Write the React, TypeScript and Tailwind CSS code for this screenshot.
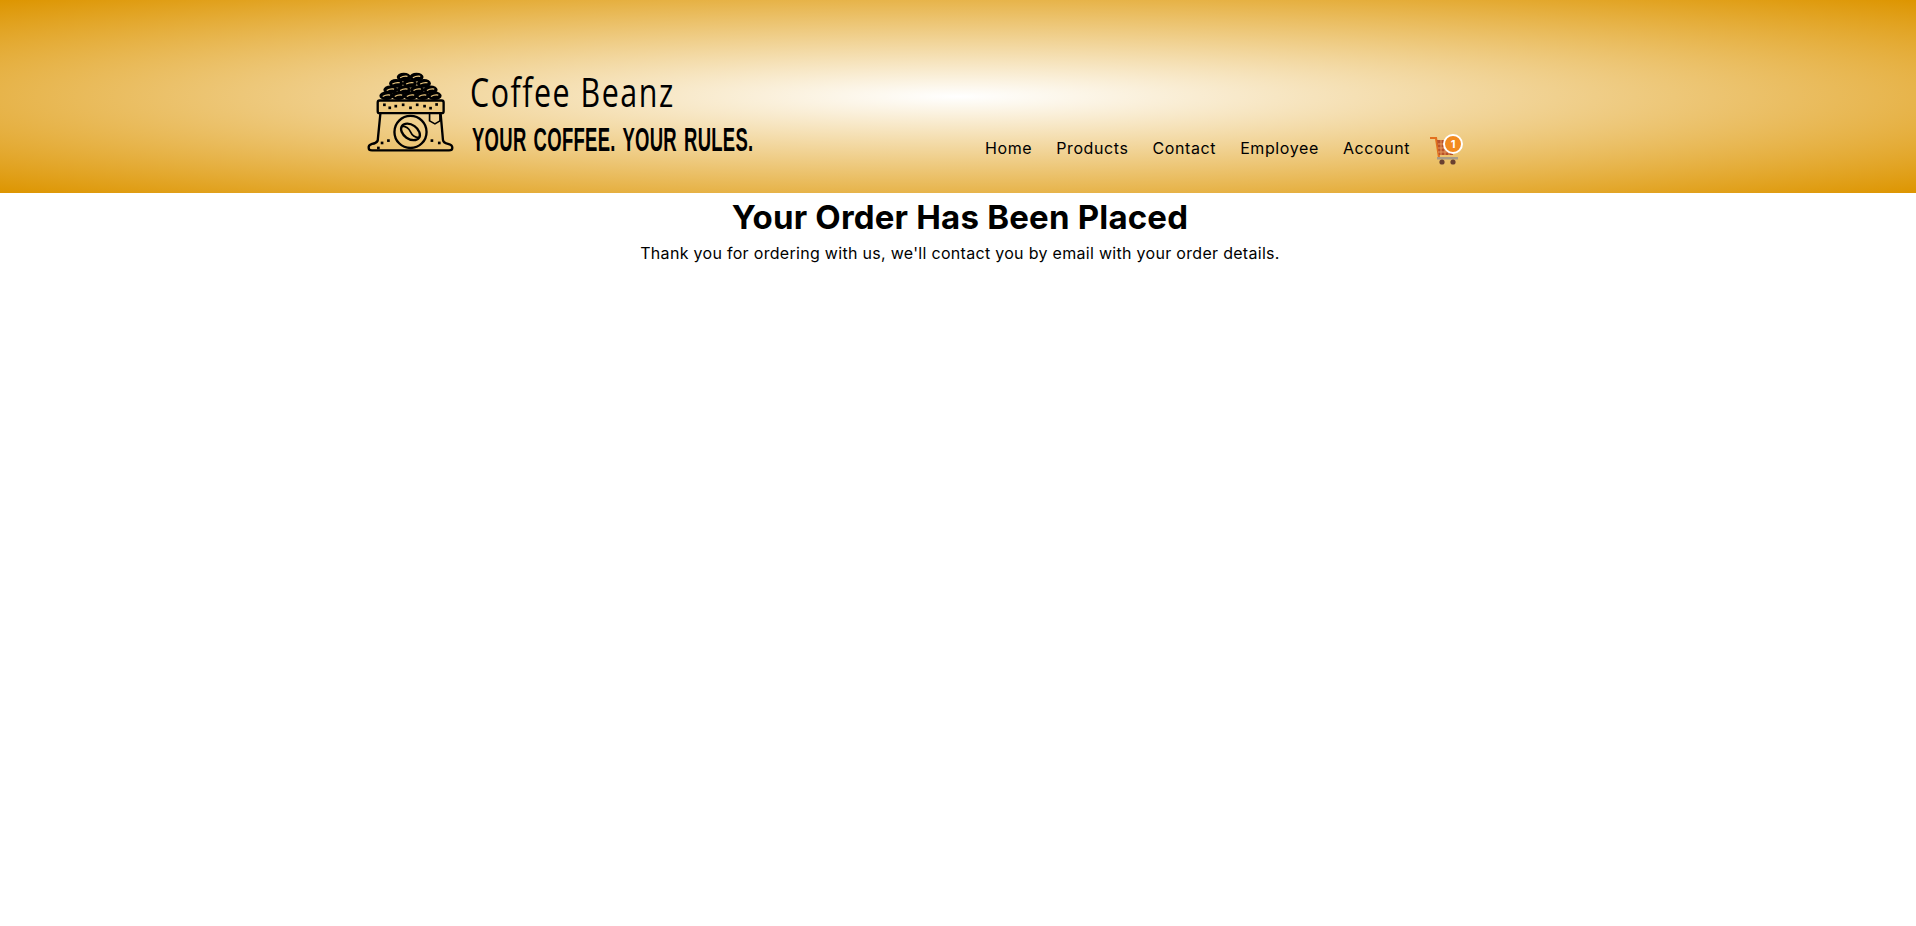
const links = ["Home", "Products", "Contact", "Employee", "Account"];

function BagLogo() {
  const beans = [
    [160, 68], [198, 68],
    [137, 87], [178, 87], [220, 87],
    [120, 106], [160, 106], [200, 106], [240, 106],
    [108, 124], [144, 124], [180, 124], [216, 124], [252, 124],
  ];
  return (
    <svg viewBox="50 50 260 245" className="w-[87px] h-[82px] shrink-0">
      {beans.map(([x, y]) => (
        <g key={`${x}-${y}`}>
          <ellipse cx={x} cy={y} rx="21" ry="13" fill="#000" />
          <path d={`M${x - 11} ${y + 2}q11 -6 22 -4`} stroke="#eec97f" strokeWidth="3.5" fill="none" />
        </g>
      ))}
      <rect x="82" y="138" width="197" height="38" rx="6" fill="#eec97f" stroke="#000" strokeWidth="7" />
      <path d="M90 177L82 258Q78 266 65 268Q54 272 55 279Q55 287 65 287H295Q305 287 305 279Q305 271 292 268Q278 265 277 256L270 177" fill="none" stroke="#000" strokeWidth="7" strokeLinejoin="round" />
      <path d="M237 177V199L253 208L268 199V177" fill="none" stroke="#000" strokeWidth="5" />
      <circle cx="180" cy="232" r="48" fill="none" stroke="#000" strokeWidth="7" />
      <g transform="rotate(35 180 232)">
        <ellipse cx="180" cy="232" rx="31" ry="21" fill="none" stroke="#000" strokeWidth="7" />
        <path d="M150 232q15 -9 30 0t30 0" fill="none" stroke="#000" strokeWidth="5" />
      </g>
      {[[102, 151], [118, 160], [136, 155], [158, 151], [180, 160], [200, 151], [222, 155], [240, 161], [258, 150],
        [95, 265], [114, 258], [244, 258], [266, 265], [84, 280]].map(([x, y]) => (
        <rect key={`${x}-${y}`} x={x - 4} y={y - 4} width="8" height="8" fill="#000" />
      ))}
    </svg>
  );
}

function Cart() {
  return (
    <div className="relative w-[34px] h-[31px] ml-[20px] shrink-0">
      <svg viewBox="0 0 34 31" className="w-[34px] h-[31px]">
        <path d="M0 4H6L9 23" fill="none" stroke="#e2701f" strokeWidth="2.2" />
        <path d="M7 6H24L23 21H9Z" fill="#b9512a" />
        <path d="M8 10H24M8 14H24M8 18H23M11 6V21M15 6V21M19 6V21" stroke="#e59a5c" strokeWidth="1" />
        <rect x="7" y="23" width="21" height="2.5" fill="#a89a86" />
        <circle cx="12" cy="28" r="2.6" fill="#6a4030" />
        <circle cx="23" cy="28" r="2.6" fill="#6a4030" />
      </svg>
      <span className="absolute left-[13px] top-0 w-[20px] h-[20px] rounded-full bg-[#f28a1e] border-2 border-white text-white text-[11px] font-bold leading-[16px] text-center">1</span>
    </div>
  );
}

export default function App() {
  return (
    <div className="min-h-screen bg-white text-black font-['Inter',sans-serif]">
      <header className="h-[193px] bg-[radial-gradient(#ffffff,#dd9500)]">
        <div className="w-[1182px] mx-auto h-full flex items-end pb-[28px]">
          <div className="flex items-start mb-[7px]">
            <BagLogo />
            <div className="ml-[17px] w-[283px] shrink-0 font-['Liberation_Sans',sans-serif] whitespace-nowrap">
              <div className="text-[40px] leading-[44px] tracking-[2px] mt-[-1px] ml-[-1px] origin-left scale-x-[0.76] font-['Open_Sans',sans-serif]">Coffee Beanz</div>
              <div className="text-[33px] leading-[36px] font-bold tracking-[0.5px] [word-spacing:3px] mt-[8px] ml-[1px] origin-left scale-x-[0.56]">YOUR COFFEE. YOUR RULES.</div>
            </div>
          </div>
          <nav className="flex items-center ml-[231px] gap-[24px] text-[16px] tracking-[0.6px] leading-[34px]">
            {links.map((l) => (
              <a key={l} href="#" className="block">{l}</a>
            ))}
          </nav>
          <Cart />
        </div>
      </header>
      <main className="text-center pl-1">
        <h1 className="text-[33px] leading-[38px] font-bold tracking-[0.2px] mt-[5px]">Your Order Has Been Placed</h1>
        <p className="text-[16px] leading-[24px] tracking-[0.3px] mt-[5px]">Thank you for ordering with us, we'll contact you by email with your order details.</p>
      </main>
    </div>
  );
}
